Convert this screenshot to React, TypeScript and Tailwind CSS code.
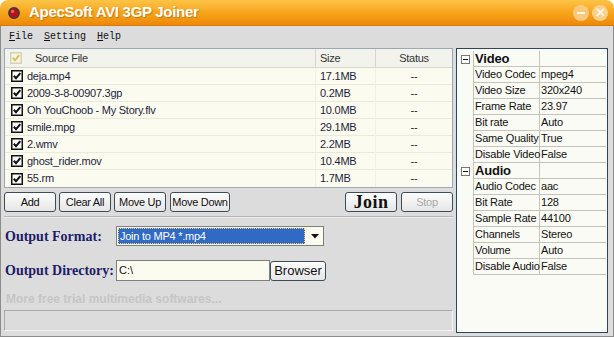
import React from "react";

type FileRow = { name: string; size: string; status: string };

const files: FileRow[] = [
  { name: "deja.mp4", size: "17.1MB", status: "--" },
  { name: "2009-3-8-00907.3gp", size: "0.2MB", status: "--" },
  { name: "Oh YouChoob - My Story.flv", size: "10.0MB", status: "--" },
  { name: "smile.mpg", size: "29.1MB", status: "--" },
  { name: "2.wmv", size: "2.2MB", status: "--" },
  { name: "ghost_rider.mov", size: "10.4MB", status: "--" },
  { name: "55.rm", size: "1.7MB", status: "--" },
];

type PropGroup = { title: string; items: [string, string][] };

const props: PropGroup[] = [
  {
    title: "Video",
    items: [
      ["Video Codec", "mpeg4"],
      ["Video Size", "320x240"],
      ["Frame Rate", "23.97"],
      ["Bit rate", "Auto"],
      ["Same Quality", "True"],
      ["Disable Video", "False"],
    ],
  },
  {
    title: "Audio",
    items: [
      ["Audio Codec", "aac"],
      ["Bit Rate", "128"],
      ["Sample Rate", "44100"],
      ["Channels", "Stereo"],
      ["Volume", "Auto"],
      ["Disable Audio", "False"],
    ],
  },
];

const sans = "font-['Liberation_Sans',Arial,sans-serif]";
const serif = "font-['Liberation_Serif','Times_New_Roman',serif]";

const CheckBox = ({ faded = false }: { faded?: boolean }) => (
  <svg width="12" height="12" viewBox="0 0 12 12" className="shrink-0">
    <rect
      x="0.75"
      y="0.75"
      width="10.5"
      height="10.5"
      fill={faded ? "#f7f5e6" : "#ffffff"}
      stroke={faded ? "#d6d2b8" : "#111111"}
      strokeWidth="1.5"
    />
    <path
      d="M2.8 5.8 L5 8.2 L9.3 3.2"
      fill="none"
      stroke={faded ? "#d9c25a" : "#111111"}
      strokeWidth="2"
    />
  </svg>
);

const Btn = ({
  children,
  className = "",
}: {
  children: React.ReactNode;
  className?: string;
}) => (
  <div
    className={`h-[20px] flex items-center justify-center rounded-[3px] border border-[#3e4c5a] bg-linear-to-b from-[#fdfdfd] to-[#e6e6e6] ${className}`}
  >
    {children}
  </div>
);

const App = () => {
  return (
    <div className="w-[614px] h-[337px] bg-white overflow-hidden">
      <div className="flex flex-col w-full h-full">
        {/* title bar */}
        <div className="h-[26px] shrink-0 rounded-t-[8px] bg-linear-to-b from-[#fcc445] via-[#f8a51a] to-[#ec890a] border-b border-[#d8760a] flex items-center pl-[8px] pr-[4px]">
          <svg width="12" height="12" viewBox="0 0 12 12">
            <circle cx="6" cy="6" r="5.2" fill="#b3141a" stroke="#3a3a3a" strokeWidth="1.4" />
            <circle cx="4.6" cy="4.4" r="1.6" fill="#f06060" />
          </svg>
          <span
            className={`ml-[9px] text-[15px] font-bold tracking-[-0.3px] text-white ${sans} [text-shadow:1px_1px_1px_rgba(170,90,0,0.55)]`}
          >
            ApecSoft AVI 3GP Joiner
          </span>
          <div className="ml-auto flex items-center gap-[3px] mr-[2px]">
            <div className="w-[16px] h-[16px] rounded-full bg-[#fbc97c] flex items-center justify-center">
              <div className="w-[8px] h-[2px] bg-[#fff6e6]" />
            </div>
            <div className="w-[16px] h-[16px] rounded-full bg-[#fbcf88] flex items-center justify-center text-[#fff6e6] text-[13px] font-bold leading-none">
              ✕
            </div>
          </div>
        </div>

        <div className="flex-1 flex flex-col bg-[#dcdcdc] border-x border-b border-[#8c8c8c]">
          {/* menu bar */}
          <div className="h-[21px] shrink-0 flex items-center pl-[8px] gap-[11px] text-[10px] text-[#111] font-['Liberation_Mono','Courier_New',monospace]">
            <span>
              <span className="underline">F</span>ile
            </span>
            <span>
              <span className="underline">S</span>etting
            </span>
            <span>
              <span className="underline">H</span>elp
            </span>
          </div>

          <div className="flex pl-[3px] pt-[1px] gap-[3px]">
            {/* left column */}
            <div className="w-[449px] flex flex-col">
              {/* file list */}
              <div className={`border border-[#9ea8b4] bg-[#fbfbef] text-[11px] tracking-[-0.25px] ${sans}`}>
                <div className="grid grid-cols-[311px_60px_76px] h-[19px] bg-[#f3f3ee] border-b border-[#d6d6cc] text-[#333]">
                  <div className="flex items-center pl-[5px] border-r border-[#d6d6cc]">
                    <CheckBox faded />
                    <span className="ml-[13px]">Source File</span>
                  </div>
                  <div className="flex items-center pl-[4px] border-r border-[#d6d6cc]">Size</div>
                  <div className="flex items-center justify-center">Status</div>
                </div>
                {files.map((f) => (
                  <div
                    key={f.name}
                    className="grid grid-cols-[311px_60px_76px] h-[17px] border-b border-[#e9e9dc] last:border-b-0 text-[#1e1e40]"
                  >
                    <div className="flex items-center pl-[6px] border-r border-[#f0f0e4]">
                      <CheckBox />
                      <span className="ml-[4px]">{f.name}</span>
                    </div>
                    <div className="flex items-center pl-[4px] border-r border-[#f0f0e4]">{f.size}</div>
                    <div className="flex items-center justify-center">{f.status}</div>
                  </div>
                ))}
              </div>

              {/* buttons */}
              <div className={`flex mt-[4px] text-[11px] tracking-[-0.3px] text-[#111] ${sans}`}>
                <Btn className="w-[52px]">Add</Btn>
                <Btn className="w-[52px] ml-[3px]">Clear All</Btn>
                <Btn className="w-[52px] ml-[3px]">Move Up</Btn>
                <Btn className="w-[60px] ml-[4px]">Move Down</Btn>
                <Btn className={`w-[52px] ml-auto text-[18px] font-bold tracking-[0.4px] ${serif}`}>Join</Btn>
                <Btn className="w-[52px] ml-[4px] text-[#a8a8a8]">Stop</Btn>
              </div>

              <div className="mt-[4px] border-t border-[#b6b6b6] border-b border-b-[#eeeeee] w-[449px]" />

              {/* output format */}
              <div className="flex items-center mt-[8px] h-[20px]">
                <div className={`w-[112px] pl-[1px] text-[14px] font-bold text-[#1c1c6a] ${serif}`}>
                  Output Format:
                </div>
                <div className="w-[208px] h-[20px] flex border border-[#7f7f7f] bg-[#fbfbef]">
                  <div className="flex-1 m-[1px] bg-[#316ac5] outline-1 outline-dotted outline-[#e8d070] -outline-offset-1 flex items-center pl-[2px]">
                    <span className={`text-[11px] tracking-[-0.25px] text-white ${sans}`}>Join to MP4 *.mp4</span>
                  </div>
                  <div className="w-[17px] flex items-center justify-center">
                    <svg width="8" height="5" viewBox="0 0 8 5">
                      <path d="M0 0 H8 L4 4.5 Z" fill="#111" />
                    </svg>
                  </div>
                </div>
              </div>

              {/* output directory */}
              <div className="flex items-center mt-[14px] h-[21px]">
                <div className={`w-[112px] pl-[1px] text-[14px] font-bold text-[#1c1c6a] ${serif}`}>
                  Output Directory:
                </div>
                <div className={`w-[154px] h-[21px] border border-[#7f7f7f] bg-[#fbfbef] flex items-center pl-[2px] text-[11px] text-[#111] ${sans}`}>
                  C:\
                </div>
                <Btn className={`w-[56px] text-[13px] text-[#111] ${sans}`}>Browser</Btn>
              </div>

              <div className={`mt-[10px] pl-[2px] h-[16px] leading-[16px] text-[12px] font-bold text-[#c6c6c6] ${sans}`}>
                More free trial multimedia softwares...
              </div>

              <div className="mt-[3px] h-[21px] w-[449px] border border-[#a9a9a9] border-r-[#f2f2f2] border-b-[#f2f2f2] bg-[#dcdcdc]" />
            </div>

            {/* properties panel */}
            <div className={`w-[152px] h-[285px] border border-[#2c4660] bg-[#fbfbf5] pt-[2px] text-[11px] tracking-[-0.2px] text-[#111] ${sans}`}>
              {props.map((g) => (
                <div key={g.title}>
                  <div className="flex h-[16px]">
                    <div className="w-[17px] border-r border-[#c4c4bc] flex items-center justify-center">
                      <svg width="9" height="9" viewBox="0 0 9 9">
                        <rect x="0.5" y="0.5" width="8" height="8" fill="#fff" stroke="#777" />
                        <path d="M2 4.5 H7" stroke="#111" />
                      </svg>
                    </div>
                    <div className="w-[66px] border-r border-b border-[#c4c4bc] pl-[1px] text-[13px] font-bold leading-[15px]">
                      {g.title}
                    </div>
                    <div className="w-[66px] border-b border-[#c4c4bc]" />
                  </div>
                  {g.items.map(([k, v]) => (
                    <div key={k} className="flex h-[16px]">
                      <div className="w-[17px] border-r border-[#c4c4bc]" />
                      <div className="w-[66px] border-r border-b border-[#c4c4bc] pl-[1px] leading-[15px] whitespace-nowrap relative z-10">
                        {k}
                      </div>
                      <div className="w-[66px] border-b border-[#c4c4bc] pl-[1px] leading-[15px]">{v}</div>
                    </div>
                  ))}
                </div>
              ))}
            </div>
          </div>
        </div>
      </div>
    </div>
  );
};

export default App;
